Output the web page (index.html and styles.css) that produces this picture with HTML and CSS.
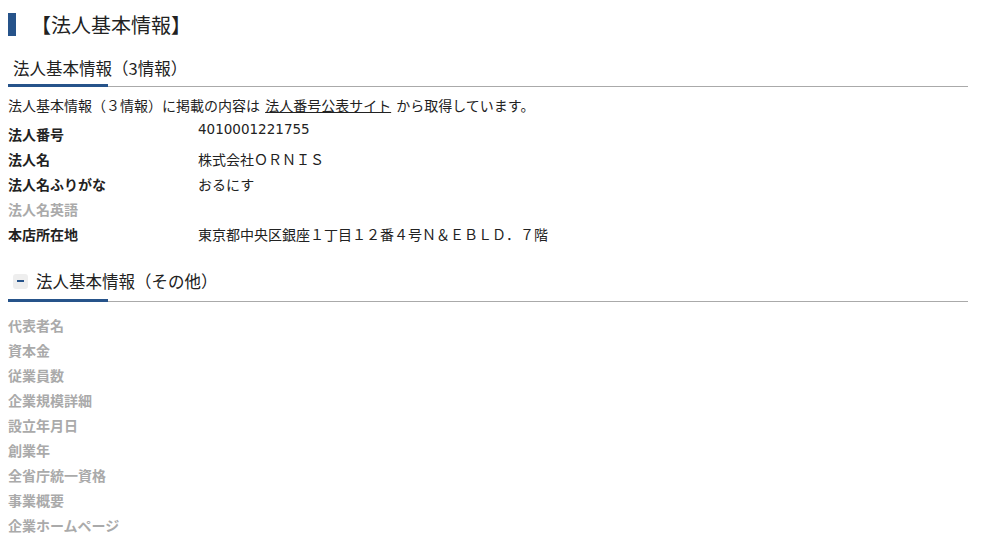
FILE: index.html
```html
<!doctype html>
<html>
<head>
<meta charset="utf-8">
<title>法人基本情報</title>
<link rel="stylesheet" href="styles.css">
</head>
<body>
<div class="wrap">
	<h1 class="page_title">【法人基本情報】</h1>

	<h2 class="sec_title">法人基本情報（3情報）</h2>
	<p class="note">法人基本情報（３情報）に掲載の内容は <a href="javascript:;">法人番号公表サイト</a> から取得しています。</p>
	<dl class="info">
		<dt>法人番号</dt><dd class="num">4010001221755</dd>
		<dt>法人名</dt><dd>株式会社ＯＲＮＩＳ</dd>
		<dt>法人名ふりがな</dt><dd>おるにす</dd>
		<dt class="empty">法人名英語</dt><dd></dd>
		<dt>本店所在地</dt><dd>東京都中央区銀座１丁目１２番４号Ｎ＆ＥＢＬＤ．７階</dd>
	</dl>

	<h2 class="sec_title sec_toggle"><span class="toggle"></span>法人基本情報（その他）</h2>
	<dl class="info other">
		<dt class="empty">代表者名</dt><dd></dd>
		<dt class="empty">資本金</dt><dd></dd>
		<dt class="empty">従業員数</dt><dd></dd>
		<dt class="empty">企業規模詳細</dt><dd></dd>
		<dt class="empty">設立年月日</dt><dd></dd>
		<dt class="empty">創業年</dt><dd></dd>
		<dt class="empty">全省庁統一資格</dt><dd></dd>
		<dt class="empty">事業概要</dt><dd></dd>
		<dt class="empty">企業ホームページ</dt><dd></dd>
	</dl>
</div>
</body>
</html>
```

FILE: styles.css
```css
*{ margin:0; padding:0; list-style:none;}
body{ background:#fff; color:#222; font-family:"Noto Sans CJK JP","Noto Sans",sans-serif; font-size:14px;}
.wrap{ width:960px; margin:0 8px; padding-top:13px;}

.page_title{ height:23px; line-height:23px; border-left:8px solid #26538a; padding-left:15px; font-size:20px; font-weight:normal;}

.sec_title{ position:relative; margin-top:20px; padding:0 0 6px 5px; line-height:24px; font-size:16.5px; font-weight:normal; border-bottom:1px solid #aaa; display:flex; align-items:center;}
.sec_title:after{ content:''; position:absolute; left:0; bottom:-1px; width:100px; height:3px; background:#26538a;}
.sec_toggle{ margin-top:22px; padding-bottom:8px;}
.toggle{ width:15px; height:15px; background:#eee; border-radius:3px; margin-right:8px; display:flex; align-items:center; justify-content:center;}
.toggle:before{ content:''; width:7px; height:2px; background:#26538a;}

.note{ margin-top:8px; line-height:20px; word-spacing:2px;}
.note a{ color:#222; text-decoration:underline;}

.info{ margin-top:7px; display:grid; grid-template-columns:190px 1fr; grid-auto-rows:25px; line-height:25px;}
.info dt{ font-weight:bold;}
.info dt.empty{ color:#aaa;}
.info dd.num{ line-height:15px; font-family:"DejaVu Sans","Noto Sans CJK JP",sans-serif; font-size:13.5px;}
.other{ margin-top:11px;}
```
